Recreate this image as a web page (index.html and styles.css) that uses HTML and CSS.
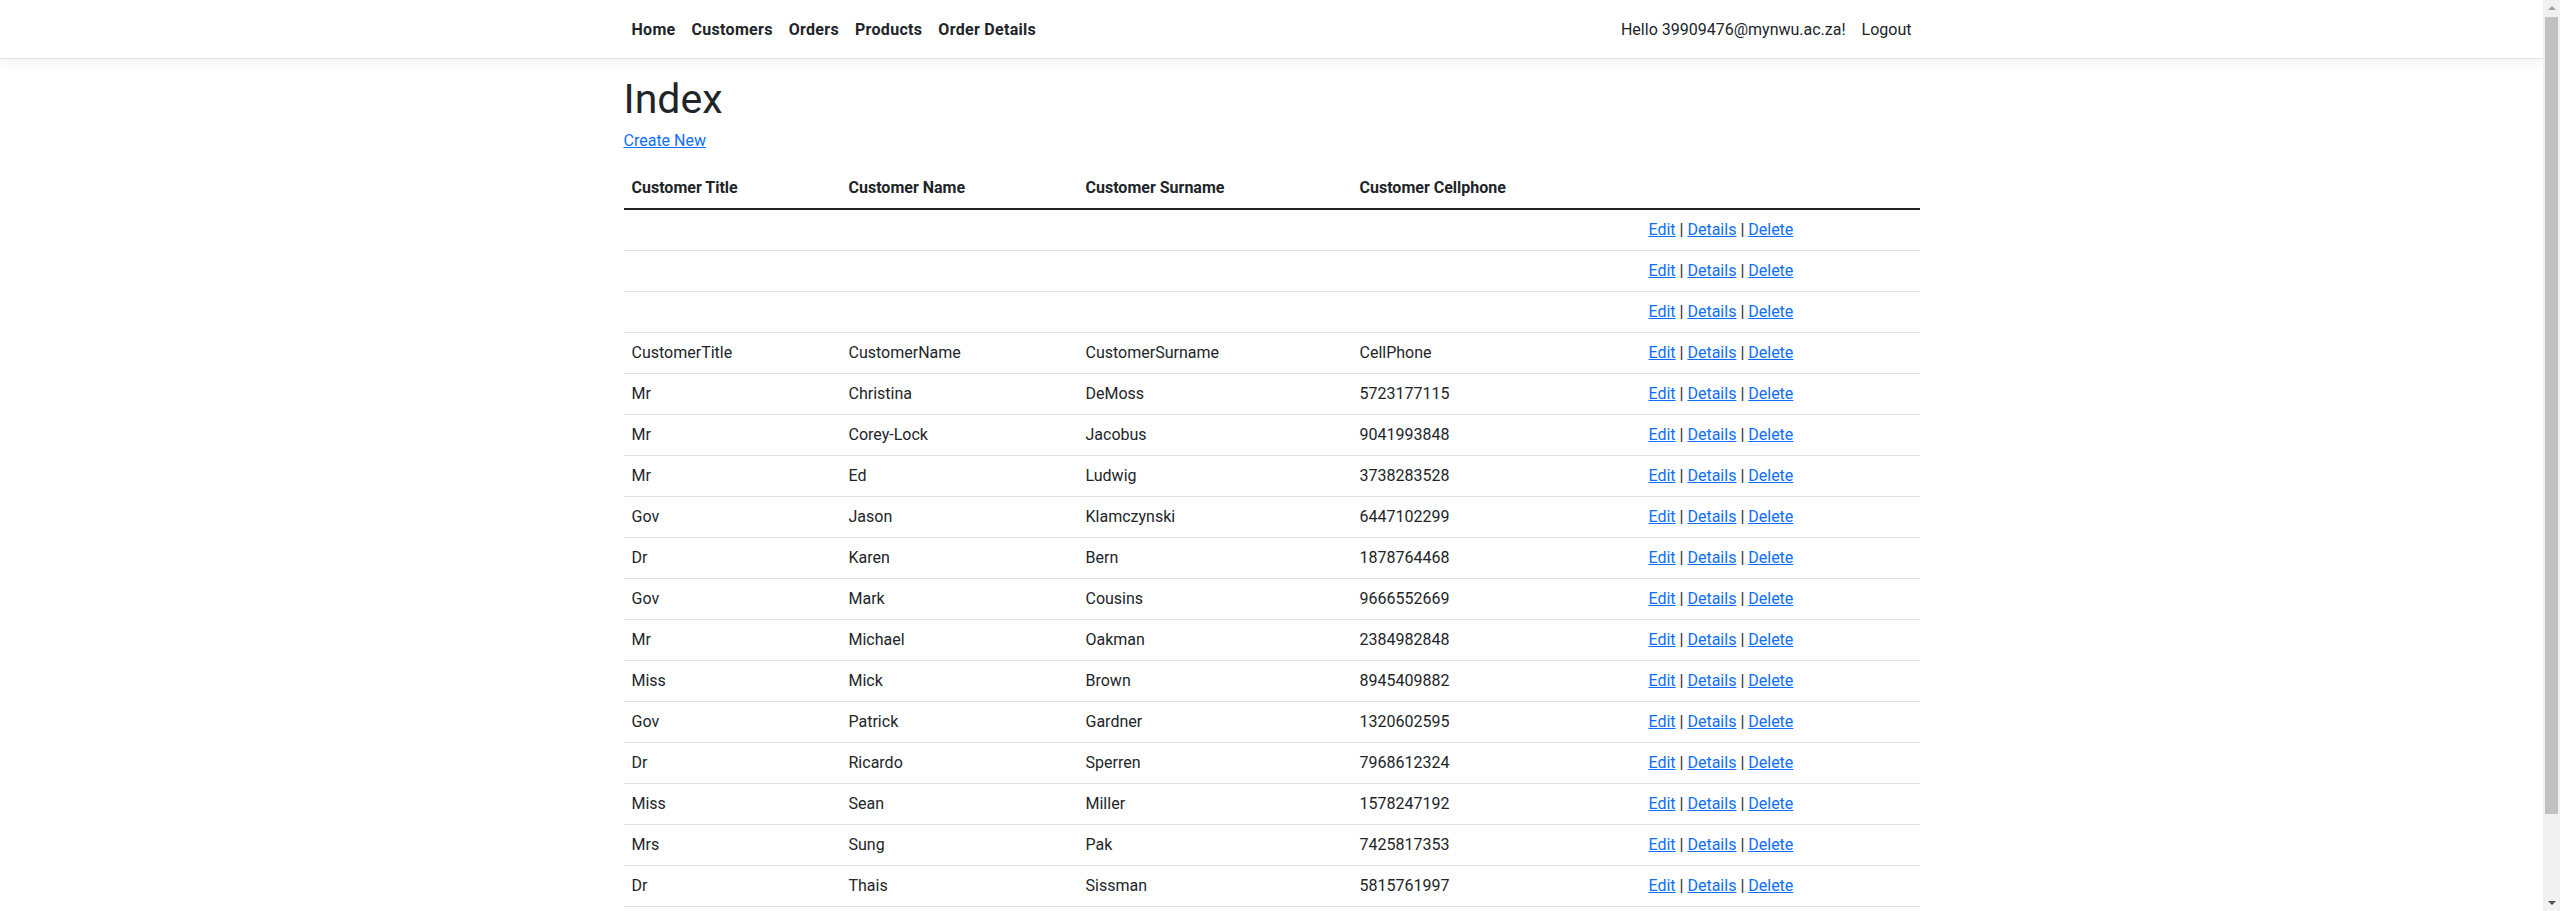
FILE: index.html
```html
<!DOCTYPE html>
<html lang="en">
<head>
<meta charset="utf-8">
<title>Index</title>
<link rel="stylesheet" href="styles.css">
</head>
<body>
<div class="viewport">
  <header class="navbar">
    <div class="container nav-inner">
      <ul class="nav-main">
        <li><a class="nav-link" href="#">Home</a></li>
        <li><a class="nav-link" href="#">Customers</a></li>
        <li><a class="nav-link" href="#">Orders</a></li>
        <li><a class="nav-link" href="#">Products</a></li>
        <li><a class="nav-link" href="#">Order Details</a></li>
      </ul>
      <ul class="nav-user">
        <li><a class="nav-link plain" href="#">Hello 39909476@mynwu.ac.za!</a></li>
        <li><button class="nav-link plain logout" type="button">Logout</button></li>
      </ul>
    </div>
  </header>
  <main class="container main">
    <h1 class="title">Index</h1>
    <p class="create"><a href="#">Create New</a></p>
    <table class="table">
      <colgroup>
        <col class="c1"><col class="c2"><col class="c3"><col class="c4"><col class="c5">
      </colgroup>
      <thead>
        <tr><th>Customer Title</th><th>Customer Name</th><th>Customer Surname</th><th>Customer Cellphone</th><th></th></tr>
      </thead>
      <tbody>
        <tr><td></td><td></td><td></td><td></td><td><a href="#">Edit</a> | <a href="#">Details</a> | <a href="#">Delete</a></td></tr>
        <tr><td></td><td></td><td></td><td></td><td><a href="#">Edit</a> | <a href="#">Details</a> | <a href="#">Delete</a></td></tr>
        <tr><td></td><td></td><td></td><td></td><td><a href="#">Edit</a> | <a href="#">Details</a> | <a href="#">Delete</a></td></tr>
        <tr><td>CustomerTitle</td><td>CustomerName</td><td>CustomerSurname</td><td>CellPhone</td><td><a href="#">Edit</a> | <a href="#">Details</a> | <a href="#">Delete</a></td></tr>
        <tr><td>Mr</td><td>Christina</td><td>DeMoss</td><td>5723177115</td><td><a href="#">Edit</a> | <a href="#">Details</a> | <a href="#">Delete</a></td></tr>
        <tr><td>Mr</td><td>Corey-Lock</td><td>Jacobus</td><td>9041993848</td><td><a href="#">Edit</a> | <a href="#">Details</a> | <a href="#">Delete</a></td></tr>
        <tr><td>Mr</td><td>Ed</td><td>Ludwig</td><td>3738283528</td><td><a href="#">Edit</a> | <a href="#">Details</a> | <a href="#">Delete</a></td></tr>
        <tr><td>Gov</td><td>Jason</td><td>Klamczynski</td><td>6447102299</td><td><a href="#">Edit</a> | <a href="#">Details</a> | <a href="#">Delete</a></td></tr>
        <tr><td>Dr</td><td>Karen</td><td>Bern</td><td>1878764468</td><td><a href="#">Edit</a> | <a href="#">Details</a> | <a href="#">Delete</a></td></tr>
        <tr><td>Gov</td><td>Mark</td><td>Cousins</td><td>9666552669</td><td><a href="#">Edit</a> | <a href="#">Details</a> | <a href="#">Delete</a></td></tr>
        <tr><td>Mr</td><td>Michael</td><td>Oakman</td><td>2384982848</td><td><a href="#">Edit</a> | <a href="#">Details</a> | <a href="#">Delete</a></td></tr>
        <tr><td>Miss</td><td>Mick</td><td>Brown</td><td>8945409882</td><td><a href="#">Edit</a> | <a href="#">Details</a> | <a href="#">Delete</a></td></tr>
        <tr><td>Gov</td><td>Patrick</td><td>Gardner</td><td>1320602595</td><td><a href="#">Edit</a> | <a href="#">Details</a> | <a href="#">Delete</a></td></tr>
        <tr><td>Dr</td><td>Ricardo</td><td>Sperren</td><td>7968612324</td><td><a href="#">Edit</a> | <a href="#">Details</a> | <a href="#">Delete</a></td></tr>
        <tr><td>Miss</td><td>Sean</td><td>Miller</td><td>1578247192</td><td><a href="#">Edit</a> | <a href="#">Details</a> | <a href="#">Delete</a></td></tr>
        <tr><td>Mrs</td><td>Sung</td><td>Pak</td><td>7425817353</td><td><a href="#">Edit</a> | <a href="#">Details</a> | <a href="#">Delete</a></td></tr>
        <tr><td>Dr</td><td>Thais</td><td>Sissman</td><td>5815761997</td><td><a href="#">Edit</a> | <a href="#">Details</a> | <a href="#">Delete</a></td></tr>
      </tbody>
    </table>
  </main>
</div>
<div class="scrollbar" aria-hidden="true">
  <span class="arrow up"></span>
  <span class="thumb"></span>
  <span class="arrow down"></span>
</div>
</body>
</html>
```

FILE: styles.css
```css
html, body {
  margin: 0;
  padding: 0;
  height: 100%;
  overflow: hidden;
}
body {
  font-family: Roboto, "Noto Sans", "Liberation Sans", sans-serif;
  font-size: 16px;
  line-height: 1.5;
  color: #212529;
  background: #fff;
}
.viewport {
  margin-right: 17px;
}
.container {
  width: 1320px;
  padding: 0 12px;
  margin: 0 auto;
  box-sizing: border-box;
}
.navbar {
  background: #fff;
  border-bottom: 1px solid #dee2e6;
  box-shadow: 0 4px 12px rgba(0, 0, 0, 0.05);
  padding: 10px 0 8px;
  margin-bottom: 16px;
}
.nav-inner {
  display: flex;
  justify-content: space-between;
  align-items: center;
}
.nav-main, .nav-user {
  list-style: none;
  margin: 0;
  padding: 0;
  display: flex;
}
.nav-link {
  display: block;
  padding: 8px;
  color: #212529;
  text-decoration: none;
  font-weight: 700;
  font-size: 16px;
  line-height: 24px;
  letter-spacing: 0.3px;
}
.nav-link.plain {
  font-weight: 400;
  letter-spacing: 0;
}
.logout {
  border: 0;
  background: none;
  font-family: inherit;
  cursor: pointer;
}
.main {
  padding-bottom: 16px;
}
.title {
  font-size: 41px;
  font-weight: 400;
  line-height: 48px;
  margin: 3px 0 6px;
}
.create {
  margin: 0 0 15px;
}
a {
  color: #0d6efd;
}
.table {
  width: 100%;
  border-collapse: collapse;
  table-layout: fixed;
}
.c1 { width: 217px; }
.c2 { width: 237px; }
.c3 { width: 274px; }
.c4 { width: 289px; }
.c5 { width: 279px; }
.table th {
  text-align: left;
  font-weight: 700;
  padding: 8px;
  border-bottom: 2px solid #212529;
}
.table td {
  padding: 8px;
  height: 24px;
  border-bottom: 1px solid #dee2e6;
  white-space: nowrap;
}
.scrollbar {
  position: fixed;
  top: 0;
  right: 0;
  bottom: 0;
  width: 17px;
  background: #f1f1f1;
  display: flex;
  flex-direction: column;
  align-items: center;
}
.arrow {
  width: 0;
  height: 0;
  border-left: 4px solid transparent;
  border-right: 4px solid transparent;
  margin: 6px 0;
}
.arrow.up {
  border-bottom: 4px solid #a3a3a3;
}
.arrow.down {
  border-top: 4px solid #505050;
  margin-top: auto;
}
.thumb {
  width: 13px;
  height: 797px;
  background: #c1c1c1;
  margin-top: 1px;
}
```
